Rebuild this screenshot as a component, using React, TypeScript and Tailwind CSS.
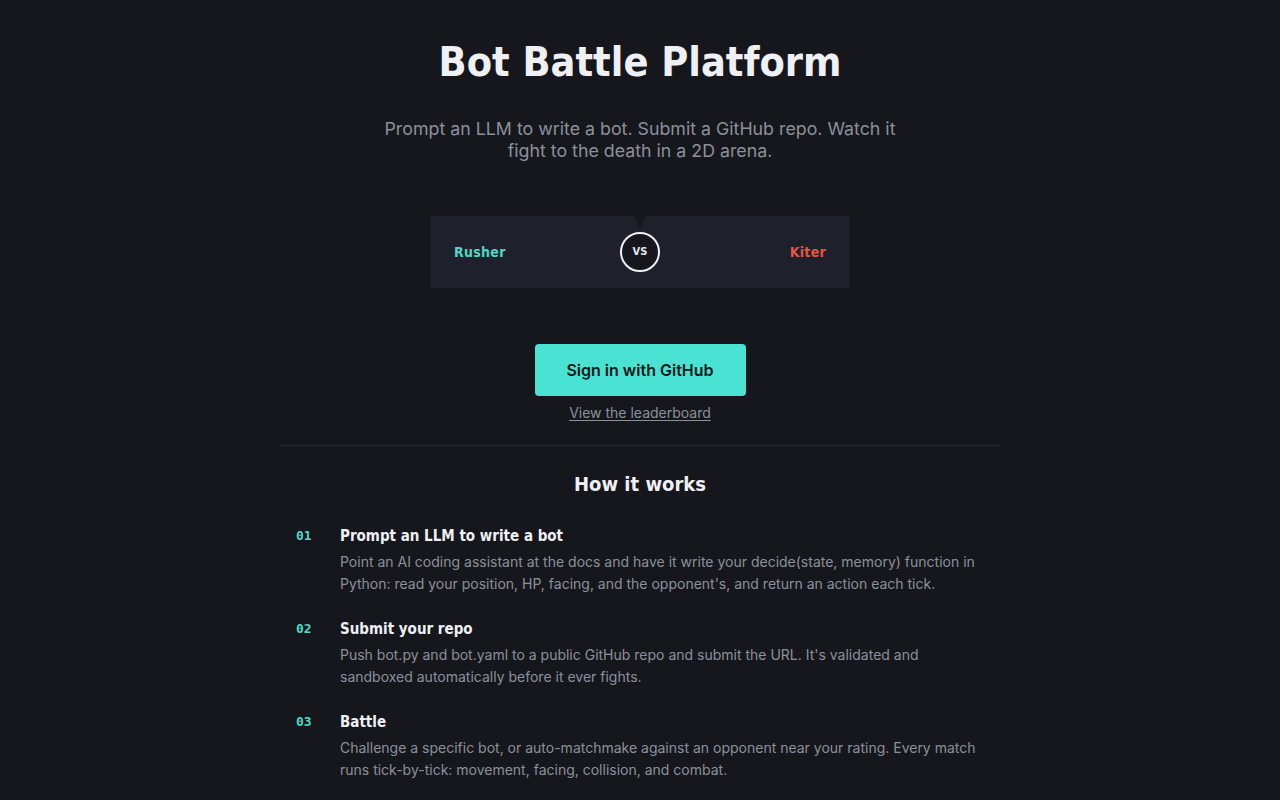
import React from "react";

const steps = [
  {
    n: "01",
    t: "Prompt an LLM to write a bot",
    d: "Point an AI coding assistant at the docs and have it write your decide(state, memory) function in Python: read your position, HP, facing, and the opponent's, and return an action each tick.",
  },
  {
    n: "02",
    t: "Submit your repo",
    d: "Push bot.py and bot.yaml to a public GitHub repo and submit the URL. It's validated and sandboxed automatically before it ever fights.",
  },
  {
    n: "03",
    t: "Battle",
    d: "Challenge a specific bot, or auto-matchmake against an opponent near your rating. Every match runs tick-by-tick: movement, facing, collision, and combat.",
  },
];

export default function App() {
  return (
    <div className="min-h-screen w-full bg-[#16171c] text-white font-['Inter',sans-serif]">
      <div className="mx-auto flex w-[720px] flex-col items-center pt-[34px]">
        <h1 className="text-[41px] font-bold leading-[56px] text-[#eef0f4] font-['DejaVu_Sans_Condensed','DejaVu_Sans',sans-serif]">
          Bot Battle Platform
        </h1>
        <p className="mt-[28px] w-[520px] text-center text-[17.8px] leading-[22px] text-[#8c909c]">
          Prompt an LLM to write a bot. Submit a GitHub repo. Watch it fight to the death in a 2D arena.
        </p>

        <div className="relative mt-[54px] flex h-[72px] w-[420px] items-center justify-between bg-[#1e212b] px-6">
          <div className="absolute left-1/2 top-0 h-0 w-0 -translate-x-1/2 border-x-[5px] border-t-[14px] border-x-transparent border-t-[#16171c]" />
          <span className="text-[14px] font-bold tracking-[0.3px] text-[#4fd8c6] font-['DejaVu_Sans_Condensed','DejaVu_Sans',sans-serif]">Rusher</span>
          <div className="absolute left-1/2 top-1/2 flex h-[40px] w-[40px] -translate-x-1/2 -translate-y-1/2 items-center justify-center rounded-full border-2 border-[#eef0f4] bg-[#16171c]">
            <span className="text-[11px] font-bold text-[#e6e8ee] font-['DejaVu_Sans_Condensed','DejaVu_Sans',sans-serif]">VS</span>
          </div>
          <span className="text-[14px] font-bold tracking-[0.3px] text-[#e5563f] font-['DejaVu_Sans_Condensed','DejaVu_Sans',sans-serif]">Kiter</span>
        </div>

        <button className="mt-[56px] h-[52px] w-[211px] rounded-[4px] bg-[#4ae2d2] text-[16px] font-semibold text-[#0f1719]">
          Sign in with GitHub
        </button>
        <a className="mt-[8px] text-[14px] leading-[18px] text-[#8c909c] underline underline-offset-2">
          View the leaderboard
        </a>

        <div className="mt-[23px] h-px w-full bg-[#262932]" />

        <h2 className="mt-[24px] text-[20px] font-bold leading-[28px] text-[#eef0f4] font-['DejaVu_Sans_Condensed','DejaVu_Sans',sans-serif]">
          How it works
        </h2>

        <div className="mt-[28px] flex w-full flex-col gap-[24px] px-4">
          {steps.map((s) => (
            <div key={s.n} className="flex">
              <span className="w-[44px] shrink-0 text-[13px] font-bold leading-[20px] text-[#4fd8c6] font-['DejaVu_Sans_Mono',monospace]">
                {s.n}
              </span>
              <div className="flex flex-col">
                <span className="text-[15px] font-bold leading-[20px] text-[#eef0f4] font-['DejaVu_Sans_Condensed','DejaVu_Sans',sans-serif]">
                  {s.t}
                </span>
                <p className="mt-[5px] text-[14px] leading-[22px] text-[#8c909c]">{s.d}</p>
              </div>
            </div>
          ))}
        </div>
      </div>
    </div>
  );
}
